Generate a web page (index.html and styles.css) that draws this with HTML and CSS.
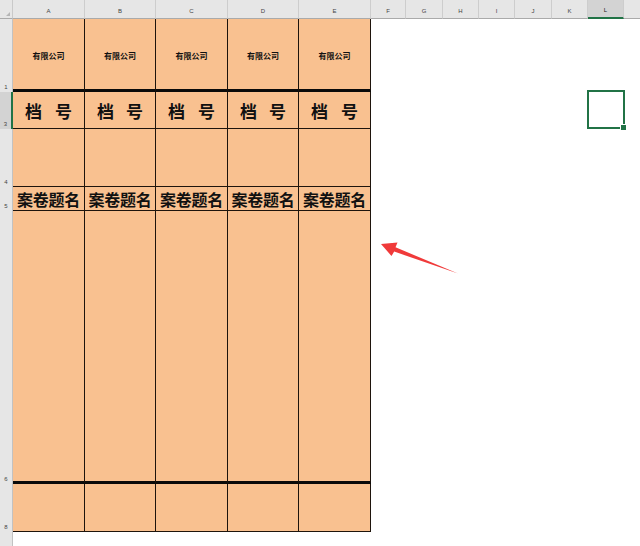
FILE: index.html
```html
<!DOCTYPE html>
<html>
<head>
<meta charset="utf-8">
<link rel="stylesheet" href="styles.css">
</head>
<body>
<div class="sheet">
  <div class="corner"><span class="tri"></span></div>
  <div class="colh">A</div>
  <div class="colh">B</div>
  <div class="colh">C</div>
  <div class="colh">D</div>
  <div class="colh last">E</div>
  <div class="colh-rest">
    <div class="ch w35">F</div>
    <div class="ch w37">G</div>
    <div class="ch w36">H</div>
    <div class="ch w36">I</div>
    <div class="ch w37">J</div>
    <div class="ch w36">K</div>
    <div class="ch w36 sel">L</div>
    <div class="ch grow"></div>
  </div>

  <div class="rowh">1</div>
  <div class="c thick small">有限公司</div>
  <div class="c thick small">有限公司</div>
  <div class="c thick small">有限公司</div>
  <div class="c thick small">有限公司</div>
  <div class="c thick small">有限公司</div>
  <div class="blank"></div>

  <div class="rowh selrow">3</div>
  <div class="c spread"><span>档</span><span>号</span></div>
  <div class="c spread"><span>档</span><span>号</span></div>
  <div class="c spread"><span>档</span><span>号</span></div>
  <div class="c spread"><span>档</span><span>号</span></div>
  <div class="c spread"><span>档</span><span>号</span></div>
  <div class="blank"></div>

  <div class="rowh">4</div>
  <div class="c"></div>
  <div class="c"></div>
  <div class="c"></div>
  <div class="c"></div>
  <div class="c"></div>
  <div class="blank"></div>

  <div class="rowh">5</div>
  <div class="c title">案卷题名</div>
  <div class="c title">案卷题名</div>
  <div class="c title">案卷题名</div>
  <div class="c title">案卷题名</div>
  <div class="c title">案卷题名</div>
  <div class="blank"></div>

  <div class="rowh">6</div>
  <div class="c thick"></div>
  <div class="c thick"></div>
  <div class="c thick"></div>
  <div class="c thick"></div>
  <div class="c thick"></div>
  <div class="blank"></div>

  <div class="rowh">8</div>
  <div class="c"></div>
  <div class="c"></div>
  <div class="c"></div>
  <div class="c"></div>
  <div class="c"></div>
  <div class="blank"></div>

  <div class="rowh empty"></div>
  <div class="blank wide"></div>

  <div class="selbox"><span class="handle"></span></div>
  <svg class="arrow" width="640" height="546" viewBox="0 0 640 546">
    <polygon points="381,244 397.5,242.5 395.5,247.3 458,273.5 394.2,251.6 391.5,256" fill="#f03a3a"/>
  </svg>
</div>
</body>
</html>
```

FILE: styles.css
```css
html, body {
  margin: 0;
  padding: 0;
  background: #ffffff;
}
body {
  font-family: "Noto Sans CJK SC", "Liberation Sans", sans-serif;
}
.sheet {
  position: relative;
  width: 640px;
  height: 546px;
  overflow: hidden;
  display: grid;
  grid-template-columns: 13px 72px 71px 72px 71px 72px 1fr;
  grid-template-rows: 19px 73px 37px 58px 24px 273px 48px 1fr;
}
.corner {
  background: #e6e6e6;
  border-right: 1px solid #c9c9c9;
  border-bottom: 1px solid #aaaaaa;
  box-sizing: border-box;
  position: relative;
}
.tri {
  position: absolute;
  right: 2px;
  bottom: 2px;
  width: 0;
  height: 0;
  border-left: 4px solid transparent;
  border-bottom: 4px solid #b5b5b5;
}
.colh, .ch {
  background: #e6e6e6;
  border-right: 1px solid #cdcdcd;
  border-bottom: 1px solid #aaaaaa;
  box-sizing: border-box;
  font-family: "Liberation Sans", sans-serif;
  font-size: 6px;
  color: #444444;
  display: flex;
  align-items: center;
  justify-content: center;
  padding-top: 3px;
}
.colh-rest {
  display: flex;
}
.w35 { width: 35px; }
.w36 { width: 36px; }
.w37 { width: 37px; }
.grow { flex: 1; border-right: none; }
.ch.sel {
  background: #d3d3d3;
  border-bottom: 2px solid #217346;
  color: #222222;
}
.rowh {
  background: #e6e6e6;
  border-right: 1px solid #c2c2c2;
  box-sizing: border-box;
  font-family: "Liberation Sans", sans-serif;
  font-size: 6px;
  color: #444444;
  display: flex;
  align-items: flex-end;
  justify-content: center;
  padding-bottom: 2px;
}
.rowh.selrow {
  background: #d3d3d3;
  border-right: 2px solid #217346;
}
.rowh.empty {
  grid-column: 1;
}
.blank {
  background: #ffffff;
}
.blank.wide {
  grid-column: 2 / 8;
}
.c {
  background: #f9c190;
  border-right: 1px solid #1e140c;
  border-bottom: 1px solid #1e140c;
  box-sizing: border-box;
  display: flex;
  align-items: center;
  justify-content: center;
  color: #111111;
  font-weight: bold;
}
.c.thick {
  border-bottom: 3px solid #0a0a0a;
}
.c.small {
  font-size: 8px;
  padding-top: 2px;
}
.c.spread {
  justify-content: space-between;
  padding: 0 12px 0 12px;
  font-size: 17px;
}
.c.title {
  font-size: 16px;
  letter-spacing: -0.3px;
  white-space: nowrap;
}
.selbox {
  position: absolute;
  left: 587px;
  top: 90px;
  width: 38px;
  height: 39px;
  border: 2px solid #217346;
  box-sizing: border-box;
}
.handle {
  position: absolute;
  right: -4px;
  bottom: -4px;
  width: 5px;
  height: 5px;
  background: #217346;
  border: 1px solid #ffffff;
}
.arrow {
  position: absolute;
  left: 0;
  top: 0;
  pointer-events: none;
}
```
